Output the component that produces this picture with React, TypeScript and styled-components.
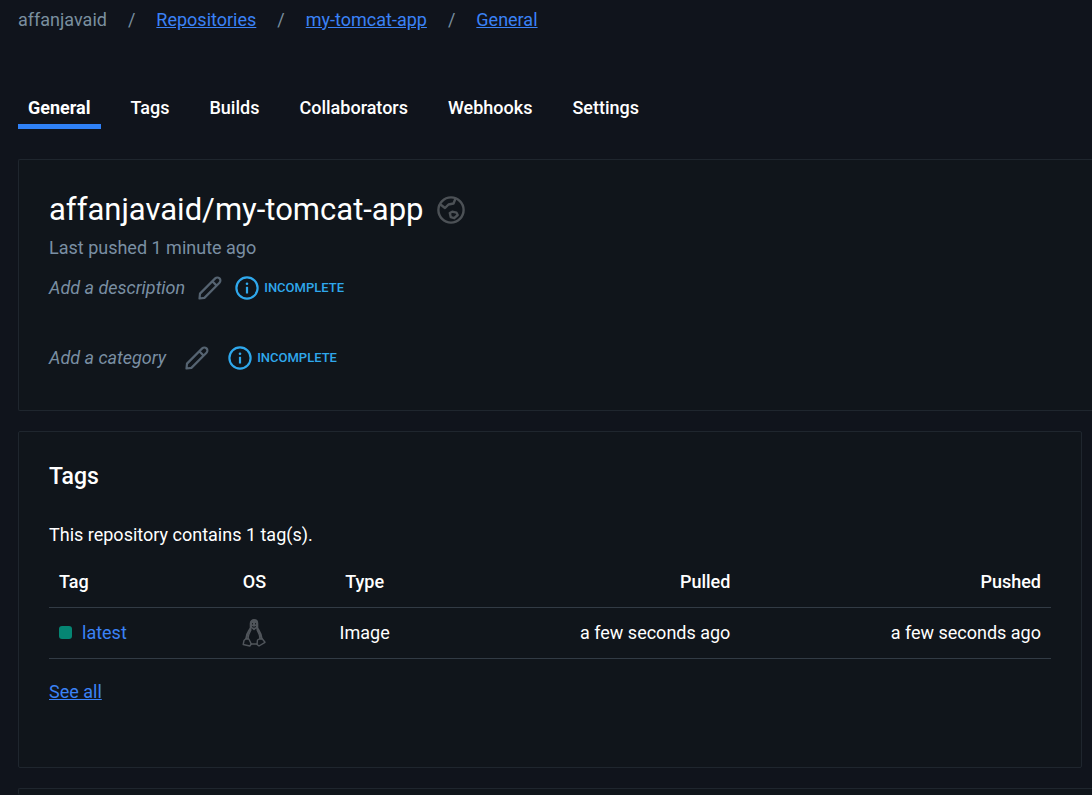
import React from 'react';
import styled, { createGlobalStyle } from 'styled-components';

const GlobalStyle = createGlobalStyle`
  *, *::before, *::after { box-sizing: border-box; }
  html { background: #10141c; }
  body {
    margin: 0;
    overflow: hidden;
    background: #10141c;
    color: #fff;
    font: 400 18px/24px Roboto, "Liberation Sans", sans-serif;
  }
`;

const Page = styled.div`
  display: flex;
  flex-direction: column;
  height: 100vh;
  overflow: hidden;
  padding: 8px 0 0 18px;
`;

const Breadcrumbs = styled.nav`
  display: flex;
  flex-shrink: 0;
  gap: 21px;
  color: #7a8f9f;
`;

const TextLink = styled.a<{ $plain?: boolean }>`
  color: #3b82f6;
  text-decoration: ${(p) => (p.$plain ? 'none' : 'underline')};
`;

const Tabs = styled.nav`
  display: flex;
  flex-shrink: 0;
  gap: 20px;
  margin: 64px 0 30px;
`;

const Tab = styled.a<{ $active?: boolean }>`
  height: 33px;
  padding: 0 10px;
  border-bottom: 5px solid ${(p) => (p.$active ? '#2f81f7' : 'transparent')};
  color: #fff;
  font-weight: ${(p) => (p.$active ? 700 : 500)};
  text-decoration: none;
`;

const Card = styled.section<{ $bleed?: boolean }>`
  flex-shrink: 0;
  margin: 0 ${(p) => (p.$bleed ? 0 : 10)}px 20px 0;
  padding: 30px;
  border: 1px solid #1f262e;
  border-right-width: ${(p) => (p.$bleed ? 0 : 1)}px;
  border-radius: ${(p) => (p.$bleed ? '2px 0 0 2px' : '2px')};
  background: #10151b;
`;

const LastCard = styled(Card)`
  flex: 1 1 0;
  min-height: 0;
  margin-bottom: 0;
  padding: 0;
  border-bottom: 0;
`;

const TitleRow = styled.div`
  display: flex;
  align-items: center;
  gap: 13px;
  height: 40px;
`;

const Title = styled.h1`
  margin: 0;
  font-size: 31px;
  font-weight: 400;
  line-height: 40px;
`;

const Pushed = styled.p`
  margin: 6px 0 12px;
  color: #7a8fa3;
`;

const Meta = styled.div`
  display: flex;
  flex-direction: column;
  gap: 38px;
  padding-bottom: 6px;
`;

const MetaRow = styled.div<{ $gap: number }>`
  display: flex;
  align-items: center;
  gap: ${(p) => p.$gap}px;
  height: 32px;
`;

const Placeholder = styled.span`
  color: #7a8fa3;
  font-style: italic;
`;

const IconButton = styled.button`
  display: flex;
  padding: 0;
  border: 0;
  background: none;
  color: #556371;
  cursor: pointer;
`;

const Status = styled.span`
  display: flex;
  align-items: center;
  gap: 5px;
  color: #2fa8ec;
  font-size: 13px;
  font-weight: 500;
`;

const CardTitle = styled.h2`
  margin: 0 0 32px;
  font-size: 23px;
  font-weight: 500;
  line-height: 29px;
`;

const Summary = styled.p`
  margin: 0 0 10px;
`;

const TagTable = styled.table`
  width: 100%;
  border-collapse: collapse;
  table-layout: fixed;
`;

const Row = styled.tr<{ $head?: boolean }>`
  height: ${(p) => (p.$head ? 50 : 51)}px;
  border-bottom: 1px solid #323b45;
`;

const HeadCell = styled.th<{ $align?: string }>`
  padding: 0 10px;
  font-weight: 500;
  text-align: ${(p) => p.$align || 'left'};
`;

const Cell = styled.td<{ $align?: string }>`
  padding: 0 10px;
  text-align: ${(p) => p.$align || 'left'};
`;

const TagName = styled.span`
  display: flex;
  align-items: center;
  gap: 10px;
`;

const StatusDot = styled.span`
  width: 13px;
  height: 13px;
  border-radius: 3px;
  background: #058573;
`;

const Penguin = styled.svg`
  display: block;
  margin: 0 auto;
`;

const Footer = styled.div`
  padding: 21px 0 33px;
`;

const GlobeIcon = () => (
  <svg width="28" height="28" viewBox="0 0 28 28" fill="none" stroke="#4c5156" strokeWidth="2.4" strokeLinejoin="round" aria-hidden="true">
    <circle cx="14" cy="14" r="12.6" />
    <path d="M2.8 8 8 12l3.500-3.500 5-1L18.500 2.500" />
    <path d="M12.800 17 15.200 15.700l4.300 1 1.200 2.300-3.500 3.200-3.400-1Z" />
  </svg>
);

const PencilIcon = () => (
  <svg width="24" height="24" viewBox="0 0 24 24" fill="none" stroke="currentColor" strokeWidth="2.2" strokeLinejoin="round" aria-hidden="true">
    <path d="M1.500 22.500 2 17.600 17.200 2.400a2.900 2.900 0 0 1 4.300 4.300L6.400 21.900ZM14.300 5.300l4.300 4.300" />
  </svg>
);

const InfoIcon = () => (
  <svg width="24" height="24" viewBox="0 0 24 24" fill="none" stroke="currentColor" strokeWidth="2.2" aria-hidden="true">
    <circle cx="12" cy="12" r="10.600" />
    <path d="M12 10.800v6.700" />
    <circle cx="12" cy="7.700" r="1.300" fill="currentColor" stroke="none" />
  </svg>
);

const LinuxIcon = () => (
  <Penguin width="24" height="28" viewBox="0 0 24 28" fill="none" stroke="#50555b" strokeWidth="1.400" strokeLinejoin="round" role="img" aria-label="Linux">
    <path d="M8.800 9V4.500c0-4.500 6.400-4.500 6.400 0V9c1.500 3.200 5 6.800 4.200 11.300M8.800 9C6.800 13 3.600 15.500 4.600 20" strokeWidth="2.200" />
    <path d="M9.200 10.500C7.500 14 5.500 16.500 6.300 20M14.800 10.500c1.700 3.200 3.600 6 3 9.500M8.500 25h7" />
    <path d="M9 4.500c0-4 6-4 6 0V8l-3 2.500L9 8Z" fill="#50555b" />
    <path d="M10.500 4.200v1.200M13.500 4.200v1.200M10 7.500l2 .8 2-.8" stroke="#10151b" strokeWidth="1" />
    <path d="m3.800 19.800 3 .2 2.500 5-1.500 2-6.600-1.500.800-4ZM20.200 19.800l-3 .200-1.700 1-.500 4.500 2 1.500 6-3.700Z" />
  </Penguin>
);

const sections = ['General', 'Tags', 'Builds', 'Collaborators', 'Webhooks', 'Settings'];
const trail = ['Repositories', 'my-tomcat-app', 'General'];

const Incomplete = () => (
  <Status>
    <InfoIcon />
    INCOMPLETE
  </Status>
);

export default function App() {
  return (
    <>
      <GlobalStyle />
      <Page>
        <Breadcrumbs aria-label="Breadcrumb">
          <span>affanjavaid</span>
          {trail.map((name) => (
            <React.Fragment key={name}>
              <span>/</span>
              <TextLink href="#">{name}</TextLink>
            </React.Fragment>
          ))}
        </Breadcrumbs>
        <Tabs aria-label="Repository sections">
          {sections.map((name, i) => (
            <Tab key={name} href="#" $active={i === 0}>{name}</Tab>
          ))}
        </Tabs>
        <Card $bleed>
          <TitleRow>
            <Title>affanjavaid/my-tomcat-app</Title>
            <GlobeIcon />
          </TitleRow>
          <Pushed>Last pushed 1 minute ago</Pushed>
          <Meta>
            <MetaRow $gap={13}>
              <Placeholder>Add a description</Placeholder>
              <IconButton aria-label="Edit description"><PencilIcon /></IconButton>
              <Incomplete />
            </MetaRow>
            <MetaRow $gap={19}>
              <Placeholder>Add a category</Placeholder>
              <IconButton aria-label="Edit category"><PencilIcon /></IconButton>
              <Incomplete />
            </MetaRow>
          </Meta>
        </Card>
        <Card>
          <CardTitle>Tags</CardTitle>
          <Summary>This repository contains 1 tag(s).</Summary>
          <TagTable>
            <colgroup>
              <col style={{ width: '16%' }} />
              <col style={{ width: '9%' }} />
              <col style={{ width: '13%' }} />
              <col />
              <col style={{ width: '31%' }} />
            </colgroup>
            <thead>
              <Row $head>
                <HeadCell>Tag</HeadCell>
                <HeadCell $align="center">OS</HeadCell>
                <HeadCell $align="center">Type</HeadCell>
                <HeadCell $align="right">Pulled</HeadCell>
                <HeadCell $align="right">Pushed</HeadCell>
              </Row>
            </thead>
            <tbody>
              <Row>
                <Cell>
                  <TagName>
                    <StatusDot />
                    <TextLink href="#" $plain>latest</TextLink>
                  </TagName>
                </Cell>
                <Cell $align="center"><LinuxIcon /></Cell>
                <Cell $align="center">Image</Cell>
                <Cell $align="right">a few seconds ago</Cell>
                <Cell $align="right">a few seconds ago</Cell>
              </Row>
            </tbody>
          </TagTable>
          <Footer>
            <TextLink href="#">See all</TextLink>
          </Footer>
        </Card>
        <LastCard $bleed />
      </Page>
    </>
  );
}
